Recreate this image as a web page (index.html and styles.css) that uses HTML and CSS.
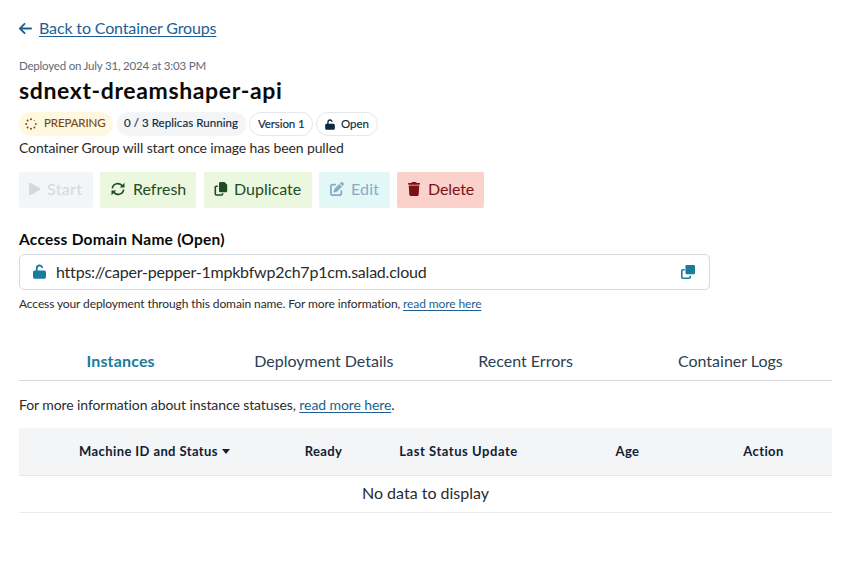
FILE: index.html
```html
<!DOCTYPE html>
<html lang="en">
<head>
<meta charset="utf-8">
<title>sdnext-dreamshaper-api</title>
<link rel="stylesheet" href="styles.css">
</head>
<body>
<svg class="defs" width="0" height="0">
  <symbol id="unlock" viewBox="0 0 14 16"><path d="M1.800 7H3V4.400A4 4 0 0 1 10.800 3.200a.9.900 0 0 1-1.800.6A2.100 2.100 0 0 0 5 4.500V7h7.200A1.800 1.800 0 0 1 14 8.800v5.100a1.800 1.800 0 0 1-1.800 1.800H1.800A1.800 1.800 0 0 1 0 13.900V8.800A1.800 1.800 0 0 1 1.800 7z"/></symbol>
</svg>
<main class="page">
  <a class="back" href="#"><svg class="arrow" viewBox="0 0 448 512"><path d="M9.400 233.400c-12.500 12.500-12.500 32.800 0 45.300l160 160c12.500 12.500 32.800 12.500 45.300 0s12.500-32.800 0-45.300L109.200 288 416 288c17.700 0 32-14.300 32-32s-14.300-32-32-32l-306.700 0L214.600 118.600c12.500-12.500 12.500-32.800 0-45.300s-32.800-12.500-45.300 0l-160 160z"/></svg><span>Back to Container Groups</span></a>
  <p class="deployed">Deployed on July 31, 2024 at 3:03 PM</p>
  <h1>sdnext-dreamshaper-api</h1>
  <div class="pills">
    <span class="pill preparing"><svg class="spin" viewBox="0 0 12 12"><circle cx="6" cy="1.200" r="1"/><circle cx="9.400" cy="2.600" r=".5"/><circle cx="10.800" cy="6" r=".9"/><circle cx="9.400" cy="9.400" r="1"/><circle cx="6" cy="10.800" r="1"/><circle cx="2.600" cy="9.400" r="1"/><circle cx="1.200" cy="6" r="1"/><circle cx="2.600" cy="2.600" r="1"/></svg><span>PREPARING</span></span>
    <span class="pill replicas"><span>0 / 3 Replicas Running</span></span>
    <span class="pill outline version"><span>Version 1</span></span>
    <span class="pill outline open"><svg class="lock-sm"><use href="#unlock"/></svg><span>Open</span></span>
  </div>
  <p class="status">Container Group will start once image has been pulled</p>
  <div class="actions">
    <button class="btn start"><svg viewBox="0 0 14 14"><path d="M0 1.900v10.200c0 1 1 1.500 1.800 1l9-5.100c.8-.5.8-1.500 0-2L1.800.9C1 .4 0 .9 0 1.900z"/></svg><span>Start</span></button>
    <button class="btn refresh"><svg viewBox="0 0 14 14"><path class="line" d="M1.300 6.300A5.600 5.600 0 0 1 11.400 4M12.700 7.700A5.600 5.600 0 0 1 2.600 10"/><path d="M13.500.8V5.500H8.800zM.5 13.200V8.500h4.700z"/></svg><span>Refresh</span></button>
    <button class="btn duplicate"><svg viewBox="0 0 14 14"><path d="M6.300 0h4.200L13.200 2.700V9A1.300 1.300 0 0 1 11.900 10.300H6.300A1.300 1.300 0 0 1 5 9V1.300A1.300 1.300 0 0 1 6.300 0z"/><path class="line" d="M3.800 4.200H2.200a.9.900 0 0 0-.9.900v7a.9.900 0 0 0 .9.900h5.500a.9.900 0 0 0 .9-.9v-.8"/></svg><span>Duplicate</span></button>
    <button class="btn edit"><svg viewBox="0 0 512 512"><path d="M471.600 21.700c-21.900-21.900-57.300-21.900-79.200 0L362.300 51.700l97.900 97.900 30.100-30.100c21.900-21.900 21.900-57.300 0-79.200L471.600 21.700zm-299.200 220c-6.100 6.100-10.800 13.600-13.500 21.900l-29.600 88.800c-2.900 8.600-.6 18.100 5.800 24.600s15.900 8.700 24.600 5.800l88.800-29.600c8.200-2.700 15.700-7.400 21.900-13.500L437.700 172.300 339.700 74.300 172.400 241.700zM96 64C43 64 0 107 0 160V416c0 53 43 96 96 96H352c53 0 96-43 96-96V320c0-17.700-14.300-32-32-32s-32 14.300-32 32v96c0 17.700-14.300 32-32 32H96c-17.700 0-32-14.300-32-32V160c0-17.700 14.300-32 32-32h96c17.700 0 32-14.300 32-32s-14.300-32-32-32H96z"/></svg><span>Edit</span></button>
    <button class="btn delete"><svg viewBox="0 0 448 512"><path d="M135.200 17.700L128 32H32C14.300 32 0 46.300 0 64S14.300 96 32 96H416c17.700 0 32-14.300 32-32s-14.300-32-32-32H320l-7.200-14.300C307.400 6.800 296.300 0 284.200 0H163.800c-12.100 0-23.200 6.800-28.600 17.700zM416 128H32L53.200 467c1.600 25.300 22.600 45 47.900 45H346.900c25.300 0 46.300-19.700 47.900-45L416 128z"/></svg><span>Delete</span></button>
  </div>
  <h2>Access Domain Name (Open)</h2>
  <div class="field"><svg class="lock"><use href="#unlock"/></svg><span class="url">https://caper-pepper-1mpkbfwp2ch7p1cm.salad.cloud</span><svg class="copy" viewBox="0 0 14 14"><rect x="4.500" y="0" width="9.500" height="9.300" rx="1.300"/><path class="line" d="M3.800 4.800H1.800a1 1 0 0 0-1 1v6.400a1 1 0 0 0 1 1h6.400a1 1 0 0 0 1-1v-1.400"/></svg></div>
  <p class="help">Access your deployment through this domain name. For more information, <a href="#">read more here</a></p>
  <nav class="tabs"><a class="active">Instances</a><a>Deployment Details</a><a class="errors">Recent Errors</a><a>Container Logs</a></nav>
  <p class="info">For more information about instance statuses, <a href="#">read more here</a>.</p>
  <table>
    <colgroup><col class="c1"><col class="c2"><col class="c3"><col class="c4"><col class="c5"></colgroup>
    <thead><tr><th>Machine ID and Status<i class="caret"></i></th><th>Ready</th><th class="update">Last Status Update</th><th>Age</th><th>Action</th></tr></thead>
    <tbody><tr><td colspan="5">No data to display</td></tr></tbody>
  </table>
</main>
</body>
</html>
```
FILE: styles.css
```css
* { box-sizing: border-box; }
body { margin: 0; background: #fff; color: #2b2b2b; font-family: Lato, "Liberation Sans", sans-serif; font-size: 16px; }
p, h1, h2 { margin: 0; white-space: nowrap; }
svg { fill: currentColor; flex: none; }
.line { fill: none; stroke: currentColor; stroke-width: 1.6; }
.defs { display: block; position: absolute; }
.page { width: 813px; margin-left: 19px; padding-top: 16px; }
a { color: #1d5f92; text-decoration: underline; text-underline-offset: 2px; text-decoration-skip-ink: none; }
.back { display: flex; align-items: center; height: 24px; gap: 7px; letter-spacing: -.14px; }
.back span { padding-bottom: 2px; }
.arrow { width: 13px; height: 15px; }
.deployed { margin-top: 17px; height: 18px; line-height: 18px; font-size: 11.5px; letter-spacing: -.2px; color: #5b6b79; }
h1 { height: 30px; line-height: 31px; font-size: 23px; letter-spacing: .63px; font-weight: 700; color: #0a0a0a; }
.pills { display: flex; margin-top: 7px; height: 24px; }
.pill { display: flex; align-items: center; height: 24px; border-radius: 12px; font-size: 11.5px; color: #0f2a3f; white-space: nowrap; -webkit-text-stroke: .15px currentColor; }
.preparing { width: 94px; padding-left: 6px; gap: 7px; margin-right: 4px; background: #fff8e1; color: #7a4a12; letter-spacing: -.1px; }
.spin { width: 12px; height: 12px; margin-bottom: 1px; }
.preparing span, .replicas span { padding-bottom: 3px; }
.replicas { width: 129px; padding-left: 7px; margin-right: 3px; background: #f3f5f7; letter-spacing: .06px; }
.outline { border: 1px solid #e4e8ec; }
.outline span { padding-bottom: 1px; }
.version { width: 64px; padding-left: 8px; margin-right: 3px; letter-spacing: -.1px; }
.open { width: 62px; padding-left: 8px; gap: 6px; }
.lock-sm { width: 10px; height: 11px; }
.status { height: 24px; line-height: 24px; font-size: 14px; letter-spacing: -.12px; }
.actions { display: flex; gap: 7px; margin-top: 12px; }
.btn { display: flex; align-items: center; height: 36px; border: 0; border-radius: 2px; padding: 0 0 0 10px; gap: 8px; font: 16px Lato, "Liberation Sans", sans-serif; white-space: nowrap; }
.btn span { padding-bottom: 3px; }
.btn svg { width: 14px; height: 14px; margin-bottom: 2px; }
.start { width: 74px; gap: 4px; letter-spacing: .35px; color: #d3d9df; background: #f3f5f7; }
.refresh { width: 96px; margin-right: 1px; padding-left: 11px; color: #1e4d25; background: #ebf7df; }
.duplicate { width: 108px; gap: 6px; color: #1e4d25; background: #ebf7df; }
.edit { width: 71px; letter-spacing: .2px; padding-left: 11px; gap: 7px; color: #86abc8; background: #e3f7f7; }
.delete { width: 87px; gap: 7px; letter-spacing: -.1px; color: #7c1015; background: #fbd2cb; }
h2 { margin-top: 20px; height: 24px; line-height: 23px; font-size: 15.5px; letter-spacing: .25px; color: #0a0a0a; }
.field { display: flex; align-items: center; width: 691px; height: 36px; margin-top: 2px; padding: 0 14px 0 13px; border: 1px solid #d3dae0; border-radius: 5px; }
.lock { width: 13px; height: 15px; margin-bottom: 1px; color: #1a7c9b; }
.url { margin-left: 10px; flex: 1; letter-spacing: -.22px; padding-bottom: 2px; }
.copy { width: 14px; height: 14px; color: #1a7c9b; }
.help { margin-top: 5px; height: 18px; line-height: 18px; font-size: 12px; letter-spacing: -.11px; }
.tabs { display: grid; grid-template-columns: repeat(4, 1fr); margin-top: 30px; height: 38px; }
.tabs a { display: flex; justify-content: center; line-height: 36px; border-bottom: 1px solid #d5dae0; color: #2b4052; text-decoration: none; white-space: nowrap; }
.tabs .active { color: #1a7c9b; font-weight: 700; letter-spacing: .15px; }
.tabs .errors { padding-right: 3px; }
.info { margin-top: 12px; height: 24px; line-height: 24px; font-size: 14px; letter-spacing: -.09px; }
table { width: 813px; margin-top: 11px; table-layout: fixed; border-collapse: separate; border-spacing: 0; }
.c1 { width: 271px; } .c2 { width: 67px; } .c3 { width: 203px; } .c4 { width: 135px; } .c5 { width: 137px; }
th { height: 48px; padding: 0 0 2px; background: #f3f5f7; border-bottom: 1px solid #e4e7ea; color: #0f2233; font-size: 13px; letter-spacing: .4px; text-align: center; white-space: nowrap; }
.update { letter-spacing: .55px; }
td { height: 37px; padding: 0 0 3px; border-bottom: 1px solid #e9ebed; text-align: center; }
.caret { display: inline-block; margin-left: 4px; border: 4px solid transparent; border-top: 5px solid; border-bottom: 0; vertical-align: 2px; }
```
